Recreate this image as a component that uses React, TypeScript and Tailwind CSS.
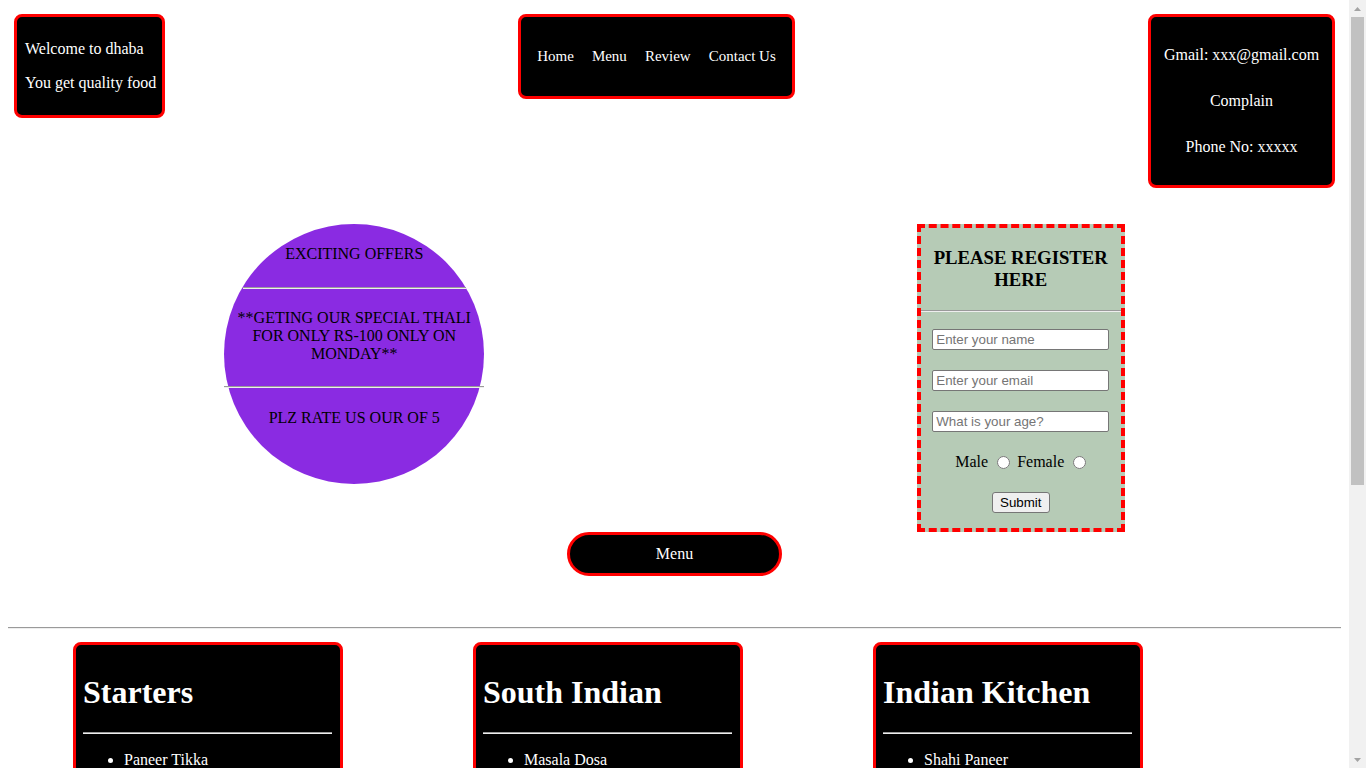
const menuCards = [
    {
        title: 'Starters',
        items: ['Paneer Tikka', 'Chilli Paneer', 'Veg Manchurian', 'Spring Roll', 'Hara Bhara Kabab', 'Aloo Tikki', 'Veg Pakora', 'Crispy Corn', 'Mushroom Tikka', 'Dahi Kabab'],
    },
    {
        title: 'South Indian',
        items: ['Masala Dosa', 'Idli Sambhar', 'Medu Vada', 'Uttapam', 'Rava Dosa', 'Plain Dosa', 'Onion Uttapam', 'Upma', 'Lemon Rice', 'Curd Rice'],
    },
    {
        title: 'Indian Kitchen',
        items: ['Shahi Paneer', 'Dal Makhani', 'Kadai Paneer', 'Butter Naan', 'Jeera Rice', 'Mix Veg', 'Chana Masala', 'Malai Kofta', 'Tandoori Roti', 'Veg Biryani'],
    },
];

function Rule({ className = '' }: { className?: string }) {
    return <div className={`h-0 border-t border-t-[#9a9a9a] border-b border-b-[#eeeeee] ${className}`} />;
}

function ScrollArrow({ down = false }: { down?: boolean }) {
    return (
        <div className="h-[17px] flex items-center justify-center">
            <svg width="7" height="4" viewBox="0 0 7 4">
                <path d={down ? 'M0 0H7L3.5 4Z' : 'M0 4H7L3.5 0Z'} fill="#a3a3a3" />
            </svg>
        </div>
    );
}

export default function App() {
    return (
        <div className="h-screen flex bg-white overflow-hidden">
            <main className="flex-1 min-w-0 h-full overflow-hidden">
                <div className="p-[8px] font-['Liberation_Serif',serif] text-[16px] text-black">
                    {/* Header */}
                    <header className="flex justify-between items-start p-[6px]">
                        <div className="w-[151px] border-[3px] border-[#ff0000] rounded-[8px] bg-black text-white pl-[8px] py-[7px] whitespace-nowrap leading-[18px]">
                            <p className="my-[16px]">Welcome to dhaba</p>
                            <p className="my-[16px]">You get quality food</p>
                        </div>

                        <nav className="w-[277px] h-[85px] border-[3px] border-[#ff0000] rounded-[8px] bg-black text-white flex items-center justify-center gap-[18px] pb-[2px] text-[15px] leading-[18px]">
                            <a href="#">Home</a>
                            <a href="#">Menu</a>
                            <a href="#">Review</a>
                            <a href="#">Contact Us</a>
                        </nav>

                        <div className="w-[187px] h-[174px] border-[3px] border-[#ff0000] rounded-[8px] bg-black text-white flex flex-col items-center justify-center gap-[28px] leading-[18px] whitespace-nowrap">
                            <p>Gmail: xxx@gmail.com</p>
                            <p>Complain</p>
                            <p>Phone No: xxxxx</p>
                        </div>
                    </header>

                    {/* Offers + register */}
                    <section className="mt-[30px] flex justify-around items-start">
                        <div className="w-[260px] h-[260px] rounded-full bg-[#8a2be2] flex flex-col items-center text-center leading-[18px]">
                            <p className="mt-[21px]">EXCITING OFFERS</p>
                            <Rule className="mt-[24px] w-[223px]" />
                            <p className="mt-[20px] w-[246px]">
                                **GETING OUR SPECIAL THALI FOR ONLY RS-100 ONLY ON MONDAY**
                            </p>
                            <Rule className="mt-[23px] w-[260px]" />
                            <p className="mt-[21px]">PLZ RATE US OUR OF 5</p>
                        </div>

                        <form className="w-[208px] h-[308px] border-4 border-dashed border-[#ff0000] bg-[#b6cbb6] flex flex-col items-center">
                            <h3 className="mt-[19px] text-[18.72px] font-bold leading-[22px] text-center">
                                PLEASE REGISTER
                                <br />
                                HERE
                            </h3>
                            <Rule className="mt-[19px] w-full" />
                            {['Enter your name', 'Enter your email', 'What is your age?'].map((ph, i) => (
                                <input
                                    key={ph}
                                    type="text"
                                    placeholder={ph}
                                    className={`${i === 0 ? 'mt-[17px]' : 'mt-[20px]'} w-[177px] h-[21px] border border-[#767676] rounded-[2px] bg-white px-[3px] text-[13.33px] font-['Liberation_Sans',sans-serif] placeholder:text-[#757575]`}
                                />
                            ))}
                            <div className="mt-[21px] h-[18px] flex items-center leading-[18px]">
                                <span>Male</span>
                                <input type="radio" name="gender" className="ml-[9px] mr-[7px] w-[13px] h-[13px]" />
                                <span>Female</span>
                                <input type="radio" name="gender" className="ml-[9px] w-[13px] h-[13px]" />
                            </div>
                            <button
                                type="button"
                                className="mt-[21px] w-[58px] h-[21px] border border-[#767676] rounded-[3px] bg-[#efefef] text-[13.33px] font-['Liberation_Sans',sans-serif] text-black"
                            >
                                Submit
                            </button>
                        </form>
                    </section>

                    <div className="flex justify-center">
                        <button
                            type="button"
                            className="w-[215px] h-[44px] border-[3px] border-[#ff0000] rounded-full bg-black text-white text-[16px]"
                        >
                            Menu
                        </button>
                    </div>

                    <Rule className="mt-[51px]" />

                    {/* Menu cards */}
                    <section className="mt-[13px] flex items-start">
                        {menuCards.map((card) => (
                            <div
                                key={card.title}
                                className="mx-[65px] w-[270px] shrink-0 border-[3px] border-[#ff0000] rounded-[8px] bg-black text-white pl-[7px] pr-[8px] py-[8px]"
                            >
                                <h1 className="mt-[20.5px] mb-[21.44px] text-[32px] font-bold leading-[37px]">{card.title}</h1>
                                <Rule />
                                <ul className="mt-[17px] mb-[16px] pl-[41px] list-disc leading-[18px]">
                                    {card.items.map((item) => (
                                        <li key={item}>{item}</li>
                                    ))}
                                </ul>
                            </div>
                        ))}
                    </section>
                </div>
            </main>

            {/* Browser scrollbar */}
            <aside className="w-[17px] h-full shrink-0 bg-[#f1f1f1] flex flex-col">
                <ScrollArrow />
                <div className="h-[468px] mx-[2px] bg-[#c1c1c1]" />
                <div className="flex-1" />
                <ScrollArrow down />
            </aside>
        </div>
    );
}
